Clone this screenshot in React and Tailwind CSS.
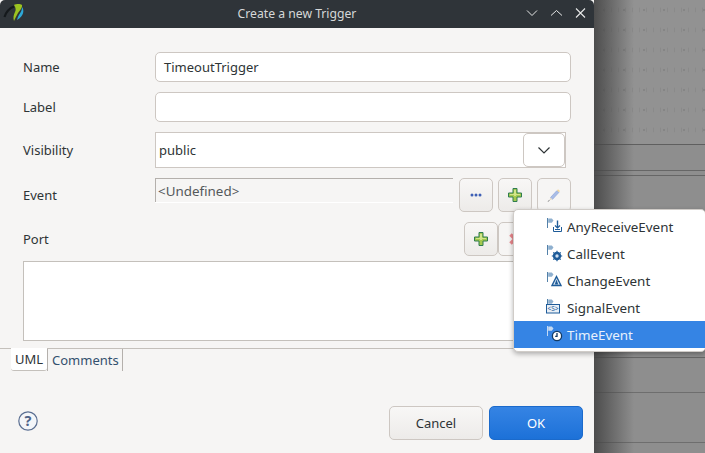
import React from 'react';

const font = { fontFamily: '"Noto Sans", sans-serif' };

function Plus() {
  return (
    <svg width="14" height="14" viewBox="0 0 14 14">
      <path d="M5 .5h4v4.500h4.500v4H9v4.500H5V9H.5V5H5z" fill="#a5c94f" stroke="#2f7d4f" strokeWidth="1" />
      <path d="M6 2h2v4h4v1H8v1H6V7H2V6h4z" fill="#d3e58a" />
    </svg>
  );
}

function Pencil() {
  return (
    <svg width="14" height="14" viewBox="0 0 14 14" fill="none">
      <path d="M3.500 9.500l6.500-7 2 1.800-6.500 7z" fill="#a9bde6" stroke="#8ea5d8" strokeWidth=".7" />
      <path d="M10 2.500l1-1.200 2 1.600-1 1.300z" fill="#f3d9a0" />
      <path d="M3.500 9.500l-.9 2.800 2.800-1z" fill="#e6dcc8" />
      <path d="M.8 13.500l1.800-1.200" stroke="#666" strokeWidth=".8" />
    </svg>
  );
}

function EventIcon({ kind, light }) {
  const c = light ? '#ffffff' : '#1f5c99';
  return (
    <svg width="18" height="17" viewBox="0 0 18 17" fill="none" className="shrink-0">
      <path d="M1.500 0v10" stroke={light ? '#d5e3f5' : '#3f739f'} strokeWidth=".9" />
      <path d="M2.200 0.500h3.600l1.700 2-1.700 2.200H2.200z" fill={light ? '#c4d9f2' : '#8fb0cf'} />
      {kind === 'receive' && (
        <g stroke={c}>
          <path d="M7.500 9v4.500h8V9" />
          <path d="M11.500 2.500v7" strokeWidth="1.400" />
          <path d="M9 7.500l2.500 2.500 2.500-2.500" strokeWidth="1.200" />
          <path d="M9 11.500h5" />
        </g>
      )}
      {kind === 'call' && (
        <g>
          <circle cx="11" cy="11" r="4.200" fill={c} />
          <path d="M11 5.800v10.400M5.800 11h10.400M7.300 7.300l7.400 7.400M14.700 7.300l-7.400 7.400" stroke={c} strokeWidth="1.200" />
          <circle cx="11" cy="11" r="1.700" fill="#cfe0f2" />
        </g>
      )}
      {kind === 'change' && (
        <g>
          <path d="M10.500 4.500l4.500 9h-9z" stroke={c} strokeWidth="1.400" fill="#dbe7f3" />
          <path d="M10.500 7.500l1.800 5h-3.600z" fill={c} />
        </g>
      )}
      {kind === 'signal' && (
        <g>
          <rect x=".5" y="5.500" width="13" height="8.500" stroke={c} fill="#e9f0f7" />
          <text x="7" y="12.300" textAnchor="middle" fontSize="6.500" fill={c} style={font}>&lt;S&gt;</text>
        </g>
      )}
      {kind === 'time' && (
        <g>
          <circle cx="11" cy="10" r="4.600" fill="#ffffff" stroke="#123a63" strokeWidth="1.300" />
          <path d="M11 7v3.300H9.200" stroke="#123a63" strokeWidth="1.300" />
        </g>
      )}
    </svg>
  );
}

function ToolButton({ children, className = '' }) {
  return (
    <div className={`w-[34px] h-[34px] shrink-0 flex items-center justify-center rounded-[5px] border border-[#cdc7c2] bg-gradient-to-b from-[#f8f7f6] to-[#edebe9] ${className}`}>
      {children}
    </div>
  );
}

function TextRow({ label, value, className = '' }) {
  return (
    <div className={`flex items-center h-[30px] pl-[23px] pr-[23px] ${className}`}>
      <div className="w-[132px] shrink-0 text-[#2e3436]">{label}</div>
      <div className="flex-1 h-full flex items-center px-2 bg-white border border-[#cdc7c2] rounded-[5px] text-[#2e3436]">{value}</div>
    </div>
  );
}

const menuItems = [
  { kind: 'receive', label: 'AnyReceiveEvent' },
  { kind: 'call', label: 'CallEvent' },
  { kind: 'change', label: 'ChangeEvent' },
  { kind: 'signal', label: 'SignalEvent' },
  { kind: 'time', label: 'TimeEvent', active: true },
];

function Backdrop() {
  return (
    <div className="flex-1 relative overflow-hidden flex flex-col bg-[#8e8e8e]">
      <div className="h-[145px] shrink-0 border-b border-[#5f5f5f] bg-[#929292] bg-[radial-gradient(#858585_0.8px,transparent_1px),radial-gradient(#8a8a8a_0.6px,transparent_1px)] bg-[length:20px_20px,7px_20px]" />
      <div className="h-[26px] shrink-0 border-b border-[#666666]" />
      <div className="h-[5px] shrink-0 border-b border-[#666666]" />
      <div className="h-[182px] shrink-0 border-b border-[#666666]" />
      <div className="h-[35px] shrink-0 border-b border-[#6e6e6e]" />
      <div className="h-[50px] shrink-0 border-b border-[#6e6e6e]" />
      <div className="absolute inset-y-0 left-0 w-[40px] bg-gradient-to-r from-[#454545]/90 to-transparent" />
    </div>
  );
}

export default function App() {
  return (
    <div className="relative w-[705px] h-[453px] overflow-hidden flex text-[13px] leading-[18px]" style={font}>
      <div className="w-[594px] shrink-0 h-full flex flex-col bg-[#f6f5f4]">
        <div className="h-[28px] shrink-0 relative flex items-center justify-center bg-[#2f3439] text-[#d6d8d8] text-[12.2px] rounded-t-[5px]">
          <svg width="28" height="28" viewBox="0 0 28 28" className="absolute left-0 top-0">
            <path d="M4.500 17C6 12 9 8.500 14 6.500" stroke="#15191c" strokeWidth="2.200" fill="none" />
            <path d="M14 5c2-1 6-1.500 8 0 .5 3-2 5-4 8-1.500 2.500-2.500 5-4 8-1-3-.5-6 1-9 1-2 1-4-1-7z" fill="#9cc321" />
            <path d="M22 7c2.500 3 2 9-5 13 .5-3 2-5 3.500-7.500 1-1.500 1.500-3.500 1.500-5.500z" fill="#2da8d8" />
          </svg>
          <span>Create a new Trigger</span>
          <div className="absolute right-[8px] top-0 h-full pb-[2px] flex items-center gap-[12px]">
            <svg width="12" height="12" viewBox="0 0 12 12" fill="none" stroke="#e6e7e7" strokeWidth="1"><path d="M1 3.500l5 5 5-5" /></svg>
            <svg width="12" height="12" viewBox="0 0 12 12" fill="none" stroke="#e6e7e7" strokeWidth="1"><path d="M1 8.500l5.500-5 5.500 5" /></svg>
            <svg width="12" height="12" viewBox="0 0 12 12" fill="none" stroke="#e6e7e7" strokeWidth="1.100"><path d="M2 1.500l9 9M11 1.500l-9 9" /></svg>
          </div>
        </div>

        <TextRow label="Name" value="TimeoutTrigger" className="mt-6" />
        <TextRow label="Label" value="" className="mt-[10px]" />

        <div className="flex items-center h-[36px] mt-[10px] pl-[23px] pr-[28px]">
          <div className="w-[132px] shrink-0 text-[#2e3436]">Visibility</div>
          <div className="flex-1 h-full flex items-center justify-between pl-[3px] bg-white border border-[#cdc7c2] text-[#2e3436]">
            <span>public</span>
            <div className="w-[42px] h-[34px] flex items-center justify-center rounded-[5px] border border-[#cdc7c2] bg-white">
              <svg width="14" height="14" viewBox="0 0 14 14" fill="none" stroke="#2e3436" strokeWidth="1.200"><path d="M1.500 4.500L7 10l5.500-5.500" /></svg>
            </div>
          </div>
        </div>

        <div className="flex items-start h-[34px] mt-[10px] pl-[23px] pr-[23px]">
          <div className="w-[132px] shrink-0 pt-2 text-[#2e3436]">Event</div>
          <div className="w-[298px] h-[24px] pl-[2px] border-t border-l border-[#b4b0ac] shadow-[0_1px_0_#ffffff] text-[#54585a] text-[13.4px] flex items-center">&lt;Undefined&gt;</div>
          <div className="flex gap-[5px] ml-[6px]">
            <ToolButton>
              <svg width="12" height="6" viewBox="0 0 12 6" fill="#3f5fb5"><circle cx="2" cy="3" r="1.500" /><circle cx="6" cy="3" r="1.500" /><circle cx="10" cy="3" r="1.500" /></svg>
            </ToolButton>
            <ToolButton><Plus /></ToolButton>
            <ToolButton className="!bg-none bg-[#f6f5f4]"><Pencil /></ToolButton>
          </div>
        </div>

        <div className="flex items-start h-[34px] mt-[10px] pl-[23px]">
          <div className="w-[441px] shrink-0 pt-2 text-[#2e3436]">Port</div>
          <ToolButton><Plus /></ToolButton>
          <ToolButton className="!bg-none bg-[#f6f5f4]">
            <svg width="14" height="14" viewBox="0 0 14 14" fill="none" stroke="#e9868c" strokeWidth="3.500"><path d="M2.500 2.500l9 9M11.500 2.500l-9 9" /></svg>
          </ToolButton>
        </div>

        <div className="h-[80px] mt-[5px] ml-[23px] mr-[23px] bg-white border border-[#c4c0bb]" />

        <div className="mt-[7px] mr-[11px] border-t border-[#c4c0bb] flex pl-[11px] h-[23px]">
          <div className="w-[36px] -mt-px text-center bg-white rounded-b-[3px] border-b border-[#c4c0bb] text-[#2e3436] flex items-center justify-center">UML</div>
          <div className="w-[76px] px-[4px] border-x border-[#b4b0ac] text-[#33506e] flex items-center">Comments</div>
        </div>

        <div className="flex-1 flex items-end justify-between pb-[13px] pl-[18px] pr-[11px]">
          <svg width="20" height="20" viewBox="0 0 20 20" className="mb-[9px]">
            <circle cx="10" cy="10" r="9.200" fill="#f4f6f9" stroke="#5b6f92" strokeWidth="1.200" />
            <text x="10" y="15" textAnchor="middle" fontSize="14.500" fontWeight="700" fill="#4f6388" style={font}>?</text>
          </svg>
          <div className="flex gap-[6px]">
            <div className="w-[94px] h-[34px] flex items-center justify-center rounded-[5px] border border-[#cdc7c2] bg-gradient-to-b from-[#f8f7f6] to-[#edebe9] text-[#2e3436]">Cancel</div>
            <div className="w-[94px] h-[34px] flex items-center justify-center rounded-[5px] border border-[#1b6acb] bg-gradient-to-b from-[#3584e4] to-[#1c71d8] text-white">OK</div>
          </div>
        </div>
      </div>

      <Backdrop />

      <div className="absolute left-[513px] top-[209px] w-[193px] h-[143px] pt-[3px] bg-white rounded-[5px] border border-[#d0ccc8] shadow-[0_2px_5px_rgba(0,0,0,0.3)]">
        {menuItems.map((item) => (
          <div key={item.kind} className={`h-[27px] flex items-center gap-[3px] pl-[32px] text-[13.4px] ${item.active ? 'bg-[#3584e4] text-[#e8f1fc]' : 'text-[#2e3436]'}`}>
            <EventIcon kind={item.kind} light={item.active} />
            <span>{item.label}</span>
          </div>
        ))}
      </div>
    </div>
  );
}
